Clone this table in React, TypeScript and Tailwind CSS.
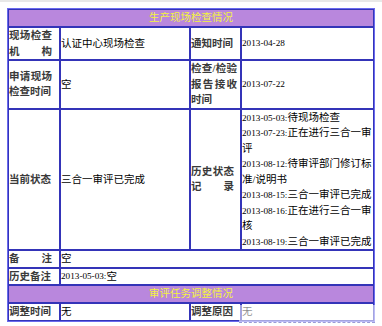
import React from "react";

const FONT = "font-['Liberation_Serif','Noto_Sans_CJK_SC',serif]";

const history = [
  ["2013-05-03:", "待现场检查"],
  ["2013-07-23:", "正在进行三合一审评"],
  ["2013-08-12:", "待审评部门修订标准/说明书"],
  ["2013-08-15:", "三合一审评已完成"],
  ["2013-08-16:", "正在进行三合一审核"],
  ["2013-08-19:", "三合一审评已完成"],
];

// 日期用稍小的西文字号，和原图宽度一致
const Num = ({ children }: { children: React.ReactNode }) => (
  <span className="text-[9.2px] leading-none">{children}</span>
);

// 标签单元格（左侧列，两端对齐）
const Label = ({
  children,
  spread = false,
}: {
  children: React.ReactNode;
  spread?: boolean;
}) => (
  <div className="bg-white flex items-center">
    <span
      className={
        "block w-[43px] text-justify font-semibold text-[#3a3a3a] " +
        (spread ? "[text-align-last:justify]" : "")
      }
    >
      {children}
    </span>
  </div>
);

const Cell = ({
  children,
  className = "",
}: {
  children?: React.ReactNode;
  className?: string;
}) => (
  <div className={"bg-white flex items-center text-black " + className}>
    {children}
  </div>
);

const Section = ({ title }: { title: string }) => (
  <div className="col-span-4 bg-[#b987dd] text-center text-[#f4f43c] h-[16px] flex items-center justify-center">
    {title}
  </div>
);

export default function App() {
  return (
    <div className={"w-[382px] h-[326px] bg-white overflow-hidden " + FONT}>
      <div className="h-[2px] bg-[#e8e8e8]" />
      <div className="pl-[7px] pt-[6px]">
        <div className="relative w-[368px] border border-[#6a6aee] bg-[#3434b8] p-[1px] grid grid-cols-[50px_128px_49px_131px] gap-[2px] text-[10.5px] leading-[15.5px]">
          <Section title="生产现场检查情况" />

          {/* 第一行 */}
          <Label spread>现场检查机构</Label>
          <Cell>认证中心现场检查</Cell>
          <Cell className="font-semibold !text-[#3a3a3a]">通知时间</Cell>
          <Cell>
            <Num>2013-04-28</Num>
          </Cell>

          {/* 第二行 */}
          <Label>申请现场检查时间</Label>
          <Cell>空</Cell>
          <div className="bg-white flex items-center">
            <span className="block w-[46px] text-justify font-semibold text-[#3a3a3a] break-all">
              检查/检验报告接收时间
            </span>
          </div>
          <Cell>
            <Num>2013-07-22</Num>
          </Cell>

          {/* 当前状态 */}
          <Label>当前状态</Label>
          <Cell>三合一审评已完成</Cell>
          <Label spread>历史状态记录</Label>
          <div className="bg-white text-black break-all">
            {history.map(([d, s]) => (
              <div key={d}>
                <Num>{d}</Num>
                {s}
              </div>
            ))}
          </div>

          <Label spread>备注</Label>
          <Cell className="col-span-3">空</Cell>

          <Label>历史备注</Label>
          <Cell className="col-span-3">
            <Num>2013-05-03:</Num>空
          </Cell>

          <Section title="审评任务调整情况" />

          <Label>调整时间</Label>
          <Cell>无</Cell>
          <Cell className="font-semibold !text-[#3a3a3a]">调整原因</Cell>
          <Cell>无</Cell>

          {/* 截图底部的淡化遮罩 */}
          <div className="absolute left-[231px] right-[-1px] bottom-[-2px] h-[18px] bg-white/55 border-b border-dashed border-[#9a9ad8]" />
        </div>
      </div>
    </div>
  );
}
